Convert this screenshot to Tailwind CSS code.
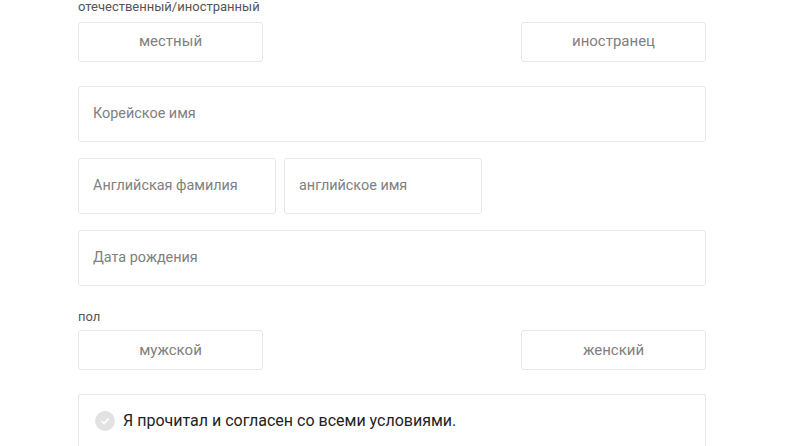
<!DOCTYPE html>
<html lang="en">
<head>
    <meta charset="UTF-8">
    <title>Регистрация</title>
    <script src="https://cdn.jsdelivr.net/npm/@tailwindcss/browser@4"></script>
</head>
<body class="bg-white h-[446px] overflow-hidden font-['Roboto',sans-serif]">
    <form class="w-[628px] ml-[78px] flex flex-col">
        <!-- Nationality -->
        <div class="h-[22px] text-[13px] leading-[14px] text-[#555]">отечественный/иностранный</div>
        <div class="flex justify-between">
            <button type="button" class="w-[185px] h-10 pb-0.5 border border-[#e6e6e6] rounded-[3px] text-[15px] text-[#808080]">местный</button>
            <button type="button" class="w-[185px] h-10 pb-0.5 border border-[#e6e6e6] rounded-[3px] text-[15px] text-[#808080]">иностранец</button>
        </div>

        <div class="mt-6 h-14 border border-[#e6e6e6] rounded-[3px] px-[14px] flex items-center text-[14.4px] text-[#808080]">Корейское имя</div>

        <div class="mt-4 flex gap-2">
            <div class="w-[198px] h-14 border border-[#e6e6e6] rounded-[3px] px-[14px] flex items-center text-[14.4px] text-[#808080]">Английская фамилия</div>
            <div class="w-[198px] h-14 border border-[#e6e6e6] rounded-[3px] px-[14px] flex items-center text-[14.4px] text-[#808080]">английское имя</div>
        </div>

        <div class="mt-4 h-14 border border-[#e6e6e6] rounded-[3px] px-[14px] flex items-center text-[14.4px] text-[#808080]">Дата рождения</div>

        <!-- Gender -->
        <div class="mt-[23px] h-[21px] text-[13px] leading-[16px] text-[#555]">пол</div>
        <div class="flex justify-between">
            <button type="button" class="w-[185px] h-10 border border-[#e6e6e6] rounded-[3px] text-[15px] text-[#808080]">мужской</button>
            <button type="button" class="w-[185px] h-10 border border-[#e6e6e6] rounded-[3px] text-[15px] text-[#808080]">женский</button>
        </div>

        <!-- Terms, cut off by the bottom of the window -->
        <div class="mt-6 h-[52px] border border-b-0 border-[#e6e6e6] rounded-t-[3px] pl-4 pt-4">
            <div class="flex items-center gap-[8px]">
                <span class="w-5 h-5 rounded-full bg-[#e2e2e2] flex items-center justify-center">
                    <svg viewBox="0 0 12 12" class="w-3 h-3" fill="none" stroke="#fff" stroke-width="1.6"><path d="M2.5 6.2 5 8.6 9.6 3.6"/></svg>
                </span>
                <span class="text-base leading-[20px] text-[#222]">Я прочитал и согласен со всеми условиями.</span>
            </div>
        </div>
    </form>
</body>
</html>
